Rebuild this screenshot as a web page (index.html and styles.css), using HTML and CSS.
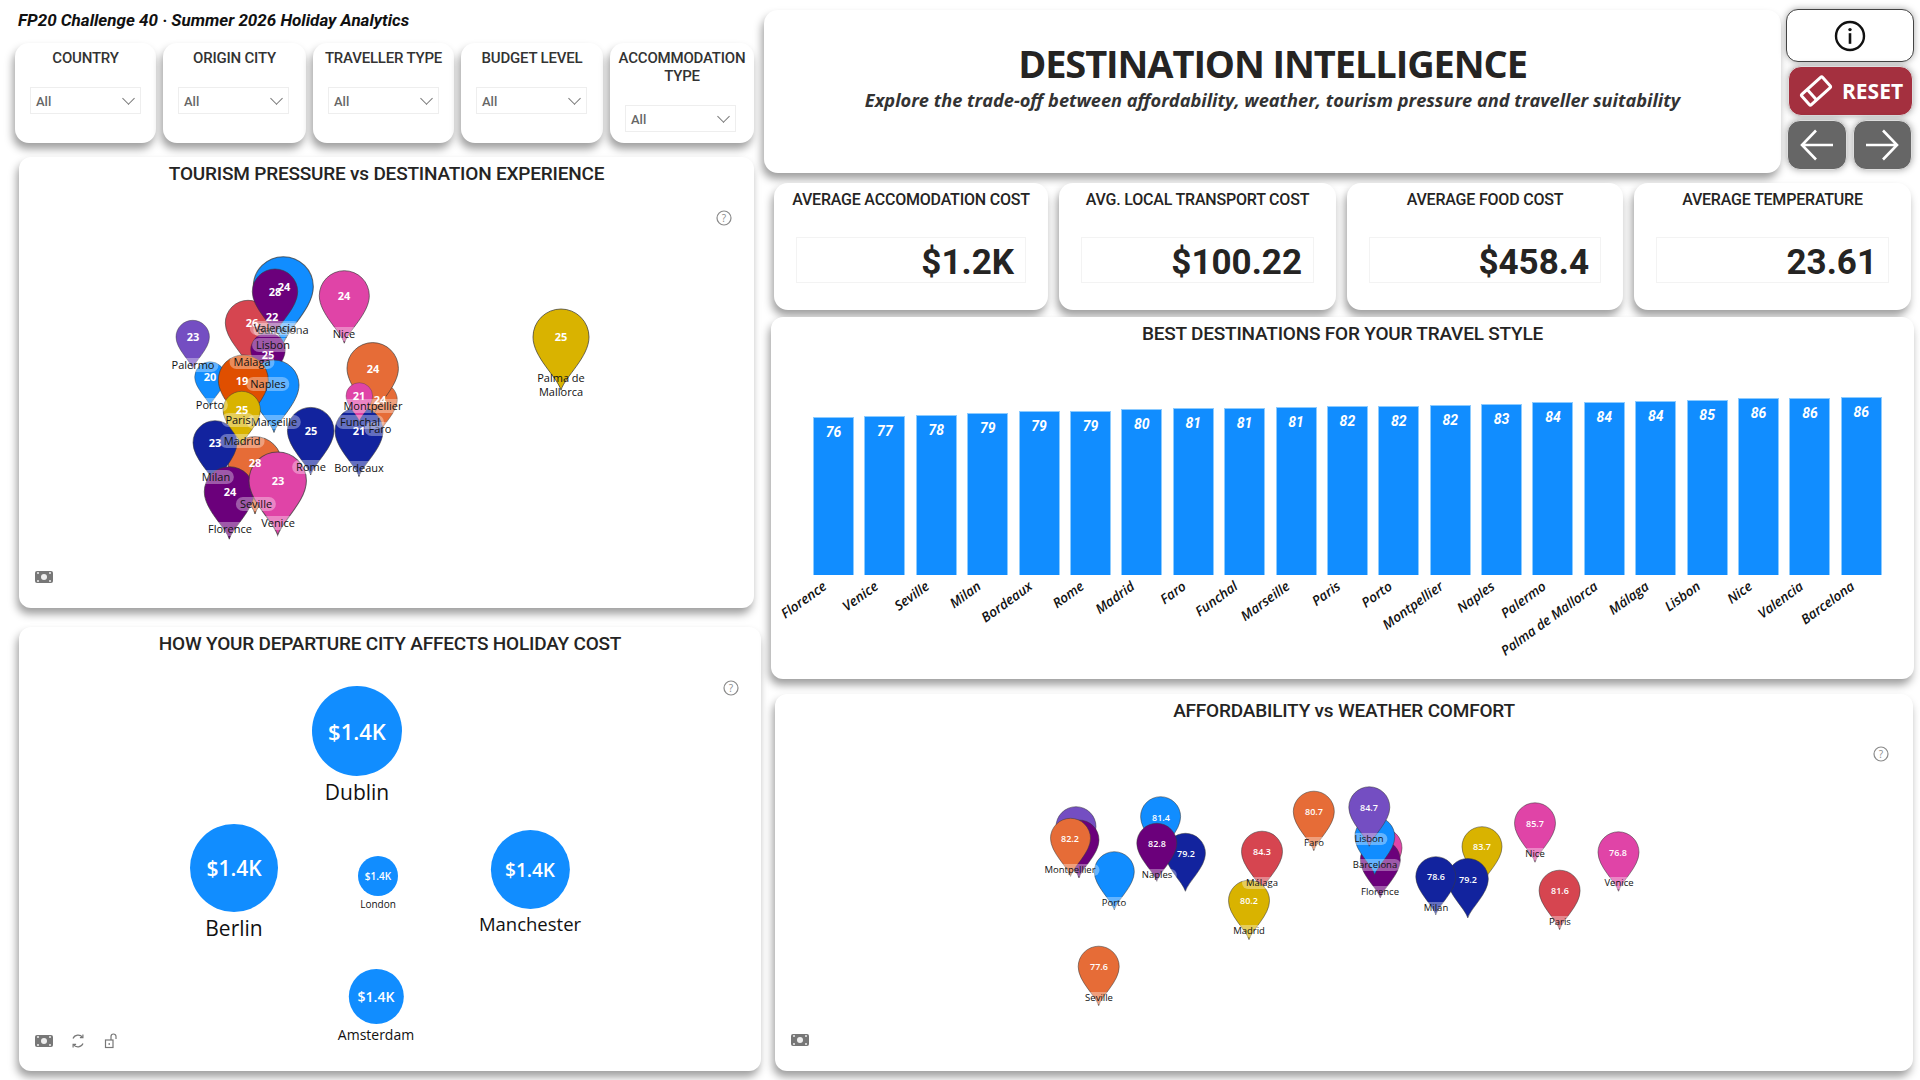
FILE: index.html
```html
<!DOCTYPE html>
<html lang="en">
<head>
    <meta charset="UTF-8">
    <title>Destination Intelligence</title>
    <link rel="stylesheet" href="styles.css">
</head>
<body>
    <svg class="defs" width="0" height="0">
        <defs>
            <path id="pin" d="M0 1.9C-.14 1.42-1 .72-1 0A1 1 0 0 1 1 0C1 .72.14 1.42 0 1.9Z"/>
            <g id="help">
                <circle cx="8" cy="8" r="7" fill="none" stroke="#8a8a8a" stroke-width="1.2"/>
                <text x="8" y="11.5" text-anchor="middle" class="help-mark">?</text>
            </g>
            <g id="focus">
                <rect x="0" y="0" width="18" height="12" rx="2" fill="#777"/>
                <circle cx="9" cy="6" r="3" fill="#eee"/>
                <path d="M2 2h2M14 2h2M2 10h2M14 10h2" stroke="#eee" stroke-width="1.4"/>
            </g>
        </defs>
    </svg>

    <div class="page">
        <!-- coluna esquerda -->
        <div class="left">
            <div class="report-title">FP20 Challenge 40 · Summer 2026 Holiday Analytics</div>

            <div class="filters">
                <div class="filter">
                    <div class="filter-name">COUNTRY</div>
                    <div class="dropdown">All<span class="chevron"></span></div>
                </div>
                <div class="filter">
                    <div class="filter-name">ORIGIN CITY</div>
                    <div class="dropdown">All<span class="chevron"></span></div>
                </div>
                <div class="filter">
                    <div class="filter-name">TRAVELLER TYPE</div>
                    <div class="dropdown">All<span class="chevron"></span></div>
                </div>
                <div class="filter">
                    <div class="filter-name">BUDGET LEVEL</div>
                    <div class="dropdown">All<span class="chevron"></span></div>
                </div>
                <div class="filter">
                    <div class="filter-name">ACCOMMODATION TYPE</div>
                    <div class="dropdown">All<span class="chevron"></span></div>
                </div>
            </div>

            <div class="panel panel-pressure">
                <h2 class="panel-title">TOURISM PRESSURE vs DESTINATION EXPERIENCE</h2>
                <div class="map">
                    <svg class="map-pins" viewBox="19 187 735 421">
                        <use href="#pin" class="c-blue" transform="translate(283.3 286.7) scale(30)"/>
                        <use href="#pin" class="c-red" transform="translate(248 323) scale(22.7)"/>
                        <use href="#pin" class="c-violet" transform="translate(275 291.7) scale(22.7)"/>
                        <use href="#pin" class="c-violet" transform="translate(268 350) scale(17.3)"/>
                        <use href="#pin" class="c-purple" transform="translate(192.7 337) scale(16.7)"/>
                        <use href="#pin" class="c-blue" transform="translate(274 385) scale(25)"/>
                        <use href="#pin" class="c-blue" transform="translate(210 377) scale(15.3)"/>
                        <use href="#pin" class="c-deep" transform="translate(243.3 380) scale(25)"/>
                        <use href="#pin" class="c-orange" transform="translate(255 463.3) scale(26.7)"/>
                        <use href="#pin" class="c-navy" transform="translate(215 442.7) scale(22)"/>
                        <use href="#pin" class="c-yellow" transform="translate(241.7 410) scale(18.7)"/>
                        <use href="#pin" class="c-violet" transform="translate(229.3 491.7) scale(25)"/>
                        <use href="#pin" class="c-pink" transform="translate(277.7 480.7) scale(28.7)"/>
                        <use href="#pin" class="c-navy" transform="translate(310.7 430.7) scale(23.3)"/>
                        <use href="#pin" class="c-orange" transform="translate(380 400) scale(17.3)"/>
                        <use href="#pin" class="c-orange" transform="translate(372.7 368.3) scale(25.7)"/>
                        <use href="#pin" class="c-navy" transform="translate(359 431) scale(24)"/>
                        <use href="#pin" class="c-pink" transform="translate(359.3 396) scale(13.3)"/>
                        <use href="#pin" class="c-pink" transform="translate(344.3 295.7) scale(25)"/>
                        <use href="#pin" class="c-yellow" transform="translate(561 337) scale(28)"/>

                        <text class="num" x="284" y="291">24</text>
                        <text class="num" x="252" y="327">26</text>
                        <text class="num" x="275" y="296">28</text>
                        <text class="num" x="272" y="321">22</text>
                        <text class="num" x="268" y="359">25</text>
                        <text class="num" x="193" y="341">23</text>
                        <text class="num" x="210" y="381">20</text>
                        <text class="num" x="242" y="385">19</text>
                        <text class="num" x="255" y="467">28</text>
                        <text class="num" x="215" y="447">23</text>
                        <text class="num" x="242" y="414">25</text>
                        <text class="num" x="230" y="496">24</text>
                        <text class="num" x="278" y="485">23</text>
                        <text class="num" x="311" y="435">25</text>
                        <text class="num" x="380" y="404">24</text>
                        <text class="num" x="373" y="373">24</text>
                        <text class="num" x="359" y="435">21</text>
                        <text class="num" x="359" y="400">21</text>
                        <text class="num" x="344" y="300">24</text>
                        <text class="num" x="561" y="341">25</text>
                    </svg>
                    <span class="pin-label" style="left:264px;top:143px">Barcelona</span>
                    <span class="pin-label" style="left:256px;top:141px">Valencia</span>
                    <span class="pin-label" style="left:325px;top:147px">Nice</span>
                    <span class="pin-label" style="left:254px;top:158px">Lisbon</span>
                    <span class="pin-label" style="left:174px;top:178px">Palermo</span>
                    <span class="pin-label" style="left:233px;top:175px">Málaga</span>
                    <span class="pin-label" style="left:249px;top:197px">Naples</span>
                    <span class="pin-label" style="left:191px;top:218px">Porto</span>
                    <span class="pin-label" style="left:354px;top:219px">Montpellier</span>
                    <span class="pin-label" style="left:255px;top:235px">Marseille</span>
                    <span class="pin-label" style="left:219px;top:233px">Paris</span>
                    <span class="pin-label" style="left:361px;top:242px">Faro</span>
                    <span class="pin-label" style="left:341px;top:235px">Funchal</span>
                    <span class="pin-label" style="left:223px;top:254px">Madrid</span>
                    <span class="pin-label" style="left:292px;top:280px">Rome</span>
                    <span class="pin-label" style="left:340px;top:281px">Bordeaux</span>
                    <span class="pin-label" style="left:197px;top:290px">Milan</span>
                    <span class="pin-label" style="left:237px;top:317px">Seville</span>
                    <span class="pin-label" style="left:259px;top:336px">Venice</span>
                    <span class="pin-label" style="left:211px;top:342px">Florence</span>
                    <span class="pin-label pin-label-wrap" style="left:542px;top:198px">Palma de<br>Mallorca</span>
                </div>
                <svg class="icon-help" width="16" height="16"><use href="#help"/></svg>
                <svg class="icon-focus" width="18" height="12"><use href="#focus"/></svg>
            </div>

            <div class="panel panel-departure">
                <h2 class="panel-title">HOW YOUR DEPARTURE CITY AFFECTS HOLIDAY COST</h2>
                <div class="bubbles">
                    <div class="bubble bubble-xl" style="left:338px;top:29px">
                        <div class="bubble-dot">$1.4K</div><div class="bubble-name">Dublin</div>
                    </div>
                    <div class="bubble bubble-lg" style="left:215px;top:167px">
                        <div class="bubble-dot">$1.4K</div><div class="bubble-name">Berlin</div>
                    </div>
                    <div class="bubble bubble-xs" style="left:359px;top:199px">
                        <div class="bubble-dot">$1.4K</div><div class="bubble-name">London</div>
                    </div>
                    <div class="bubble bubble-md" style="left:511px;top:173px">
                        <div class="bubble-dot">$1.4K</div><div class="bubble-name">Manchester</div>
                    </div>
                    <div class="bubble bubble-sm" style="left:357px;top:312px">
                        <div class="bubble-dot">$1.4K</div><div class="bubble-name">Amsterdam</div>
                    </div>
                </div>
                <svg class="icon-help" width="16" height="16"><use href="#help"/></svg>
                <div class="panel-tools">
                    <svg width="18" height="12"><use href="#focus"/></svg>
                    <svg width="16" height="16" viewBox="0 0 16 16" fill="none" stroke="#777" stroke-width="1.2">
                        <path d="M3 5.5A5.6 5.6 0 0 1 12.6 4.4M13 10.5A5.6 5.6 0 0 1 3.4 11.6"/>
                        <path d="M12.9 1.6v3h-3M3.1 14.4v-3h3"/>
                    </svg>
                    <svg width="16" height="16" viewBox="0 0 16 16" fill="none" stroke="#777" stroke-width="1.2">
                        <rect x="2.5" y="7" width="7.5" height="7.5"/>
                        <path d="M8 7V3.5a2.5 2.5 0 0 1 5 0V6M6.2 10v2"/>
                    </svg>
                </div>
            </div>
        </div>

        <!-- coluna direita -->
        <div class="right">
            <div class="top-row">
                <div class="header-card">
                    <h1>DESTINATION INTELLIGENCE</h1>
                    <p>Explore the trade-off between affordability, weather, tourism pressure and traveller suitability</p>
                </div>
                <div class="buttons">
                    <div class="btn-info">
                        <svg width="32" height="32" viewBox="0 0 32 32">
                            <circle cx="16" cy="16" r="14" fill="none" stroke="#111" stroke-width="2.4"/>
                            <circle cx="16" cy="9.6" r="1.7" fill="#111"/>
                            <rect x="14.7" y="13.2" width="2.6" height="10.6" fill="#111"/>
                        </svg>
                    </div>
                    <div class="btn-reset">
                        <svg width="36" height="36" viewBox="0 0 36 36" fill="none" stroke="#fff" stroke-width="3">
                            <g transform="rotate(-42 18 18)">
                                <rect x="4" y="11" width="28" height="14" rx="1.5"/>
                                <path d="M12.500 11v14"/>
                            </g>
                        </svg>
                        <span>RESET</span>
                    </div>
                    <div class="nav-row">
                        <div class="btn-nav">
                            <svg width="36" height="34" viewBox="0 0 36 34" fill="none" stroke="#fff" stroke-width="2.6">
                                <path d="M34 17H3M17 2.5L3 17l14 14.5"/>
                            </svg>
                        </div>
                        <div class="btn-nav">
                            <svg width="36" height="34" viewBox="0 0 36 34" fill="none" stroke="#fff" stroke-width="2.6">
                                <path d="M2 17h31M19 2.5L33 17 19 31.500"/>
                            </svg>
                        </div>
                    </div>
                </div>
            </div>

            <div class="kpis">
                <div class="kpi">
                    <div class="kpi-name">AVERAGE ACCOMODATION COST</div>
                    <div class="kpi-value">$1.2K</div>
                </div>
                <div class="kpi">
                    <div class="kpi-name">AVG. LOCAL TRANSPORT COST</div>
                    <div class="kpi-value">$100.22</div>
                </div>
                <div class="kpi">
                    <div class="kpi-name">AVERAGE FOOD COST</div>
                    <div class="kpi-value">$458.4</div>
                </div>
                <div class="kpi">
                    <div class="kpi-name">AVERAGE TEMPERATURE</div>
                    <div class="kpi-value">23.61</div>
                </div>
            </div>

            <div class="panel panel-best">
                <h2 class="panel-title">BEST DESTINATIONS FOR YOUR TRAVEL STYLE</h2>
                <div class="bars">
                    <div class="bar" style="height:158px"><span class="bar-value">76</span><span class="bar-name">Florence</span></div>
                    <div class="bar" style="height:159px"><span class="bar-value">77</span><span class="bar-name">Venice</span></div>
                    <div class="bar" style="height:160px"><span class="bar-value">78</span><span class="bar-name">Seville</span></div>
                    <div class="bar" style="height:162px"><span class="bar-value">79</span><span class="bar-name">Milan</span></div>
                    <div class="bar" style="height:164px"><span class="bar-value">79</span><span class="bar-name">Bordeaux</span></div>
                    <div class="bar" style="height:164px"><span class="bar-value">79</span><span class="bar-name">Rome</span></div>
                    <div class="bar" style="height:166px"><span class="bar-value">80</span><span class="bar-name">Madrid</span></div>
                    <div class="bar" style="height:167px"><span class="bar-value">81</span><span class="bar-name">Faro</span></div>
                    <div class="bar" style="height:167px"><span class="bar-value">81</span><span class="bar-name">Funchal</span></div>
                    <div class="bar" style="height:168px"><span class="bar-value">81</span><span class="bar-name">Marseille</span></div>
                    <div class="bar" style="height:169px"><span class="bar-value">82</span><span class="bar-name">Paris</span></div>
                    <div class="bar" style="height:169px"><span class="bar-value">82</span><span class="bar-name">Porto</span></div>
                    <div class="bar" style="height:170px"><span class="bar-value">82</span><span class="bar-name">Montpellier</span></div>
                    <div class="bar" style="height:171px"><span class="bar-value">83</span><span class="bar-name">Naples</span></div>
                    <div class="bar" style="height:173px"><span class="bar-value">84</span><span class="bar-name">Palermo</span></div>
                    <div class="bar" style="height:173px"><span class="bar-value">84</span><span class="bar-name">Palma de Mallorca</span></div>
                    <div class="bar" style="height:174px"><span class="bar-value">84</span><span class="bar-name">Málaga</span></div>
                    <div class="bar" style="height:175px"><span class="bar-value">85</span><span class="bar-name">Lisbon</span></div>
                    <div class="bar" style="height:177px"><span class="bar-value">86</span><span class="bar-name">Nice</span></div>
                    <div class="bar" style="height:177px"><span class="bar-value">86</span><span class="bar-name">Valencia</span></div>
                    <div class="bar" style="height:178px"><span class="bar-value">86</span><span class="bar-name">Barcelona</span></div>
                </div>
            </div>

            <div class="panel panel-comfort">
                <h2 class="panel-title">AFFORDABILITY vs WEATHER COMFORT</h2>
                <div class="map">
                    <svg class="map-pins map-small" viewBox="775 724 1138 347">
                        <use href="#pin" class="c-purple" transform="translate(1076 826.7) scale(20)"/>
                        <use href="#pin" class="c-violet" transform="translate(1079 840) scale(20)"/>
                        <use href="#pin" class="c-orange" transform="translate(1070.500 838.300) scale(20)"/>
                        <use href="#pin" class="c-blue" transform="translate(1114.300 871.700) scale(20)"/>
                        <use href="#pin" class="c-blue" transform="translate(1160.600 816.700) scale(20)"/>
                        <use href="#pin" class="c-navy" transform="translate(1185.400 853.300) scale(20)"/>
                        <use href="#pin" class="c-violet" transform="translate(1156.800 843.300) scale(20)"/>
                        <use href="#pin" class="c-red" transform="translate(1262 851.700) scale(20.500)"/>
                        <use href="#pin" class="c-yellow" transform="translate(1249 900.700) scale(20.500)"/>
                        <use href="#pin" class="c-orange" transform="translate(1313.800 811.700) scale(20.500)"/>
                        <use href="#pin" class="c-pink" transform="translate(1382 848) scale(20)"/>
                        <use href="#pin" class="c-violet" transform="translate(1380.300 860) scale(20)"/>
                        <use href="#pin" class="c-blue" transform="translate(1374.800 836.700) scale(20)"/>
                        <use href="#pin" class="c-purple" transform="translate(1369.300 807.300) scale(20.500)"/>
                        <use href="#pin" class="c-yellow" transform="translate(1482 846.700) scale(20)"/>
                        <use href="#pin" class="c-navy" transform="translate(1467.800 879) scale(20.500)"/>
                        <use href="#pin" class="c-navy" transform="translate(1435.800 876.700) scale(20)"/>
                        <use href="#pin" class="c-pink" transform="translate(1535 823.300) scale(20.500)"/>
                        <use href="#pin" class="c-red" transform="translate(1559.600 890.700) scale(20.500)"/>
                        <use href="#pin" class="c-pink" transform="translate(1618.500 852.300) scale(20.500)"/>
                        <use href="#pin" class="c-orange" transform="translate(1098.700 966.700) scale(20.500)"/>

                        <text class="num" x="1070" y="842">82.2</text>
                        <text class="num" x="1161" y="821">81.4</text>
                        <text class="num" x="1186" y="857">79.2</text>
                        <text class="num" x="1157" y="847">82.8</text>
                        <text class="num" x="1262" y="855">84.3</text>
                        <text class="num" x="1249" y="904">80.2</text>
                        <text class="num" x="1314" y="815">80.7</text>
                        <text class="num" x="1369" y="811">84.7</text>
                        <text class="num" x="1482" y="850">83.7</text>
                        <text class="num" x="1468" y="883">79.2</text>
                        <text class="num" x="1436" y="880">78.6</text>
                        <text class="num" x="1535" y="827">85.7</text>
                        <text class="num" x="1560" y="894">81.6</text>
                        <text class="num" x="1618" y="856">76.8</text>
                        <text class="num" x="1099" y="970">77.6</text>
                    </svg>
                    <span class="pin-label pin-label-sm" style="left:295px;top:146px">Montpellier</span>
                    <span class="pin-label pin-label-sm" style="left:339px;top:179px">Porto</span>
                    <span class="pin-label pin-label-sm" style="left:382px;top:151px">Naples</span>
                    <span class="pin-label pin-label-sm" style="left:487px;top:159px">Málaga</span>
                    <span class="pin-label pin-label-sm" style="left:474px;top:207px">Madrid</span>
                    <span class="pin-label pin-label-sm" style="left:539px;top:119px">Faro</span>
                    <span class="pin-label pin-label-sm" style="left:594px;top:115px">Lisbon</span>
                    <span class="pin-label pin-label-sm" style="left:600px;top:141px">Barcelona</span>
                    <span class="pin-label pin-label-sm" style="left:605px;top:168px">Florence</span>
                    <span class="pin-label pin-label-sm" style="left:661px;top:184px">Milan</span>
                    <span class="pin-label pin-label-sm" style="left:760px;top:130px">Nice</span>
                    <span class="pin-label pin-label-sm" style="left:785px;top:198px">Paris</span>
                    <span class="pin-label pin-label-sm" style="left:844px;top:159px">Venice</span>
                    <span class="pin-label pin-label-sm" style="left:324px;top:274px">Seville</span>
                </div>
                <svg class="icon-help" width="16" height="16"><use href="#help"/></svg>
                <svg class="icon-focus" width="18" height="12"><use href="#focus"/></svg>
            </div>
        </div>
    </div>
</body>
</html>
```
FILE: styles.css
```css
:root {
    --blue: #118dff;
    --navy: #12239e;
    --orange: #e66c37;
    --violet: #6b007b;
    --pink: #e044a7;
    --purple: #744ec2;
    --yellow: #d9b300;
    --red: #d64550;
    --text-color: #252423;
    --card-shadow: -2px 6px 8px rgba(0, 0, 0, 0.38);
}

* {
    margin: 0;
    padding: 0;
    box-sizing: border-box;
}

body {
    width: 1920px;
    height: 1080px;
    overflow: hidden;
    background-color: #fff;
    color: var(--text-color);
    font-family: 'Roboto', sans-serif;
}

.defs {
    position: absolute;
}

.page {
    display: flex;
    height: 100%;
}

/* Coluna esquerda */
.left {
    width: 764px;
    padding: 10px 0 0 15px;
}

.report-title {
    height: 33px;
    padding-left: 3px;
    font-size: 17px;
    font-weight: 700;
    font-style: italic;
    color: #111;
}

.filters {
    display: grid;
    grid-template-columns: 141px 143px 141px 142px 144px;
    gap: 7px;
    width: 739px;
    margin-bottom: 14px;
}

.filter {
    height: 100px;
    background-color: #fff;
    border-radius: 14px;
    box-shadow: var(--card-shadow);
}

.filter-name {
    padding-top: 6px;
    margin-bottom: 20px;
    font-size: 15px;
    font-weight: 500;
    line-height: 18px;
    letter-spacing: -0.2px;
    text-align: center;
    color: #333;
}

.dropdown {
    position: relative;
    width: 111px;
    height: 27px;
    margin-left: 15px;
    padding-left: 5px;
    border: 1px solid #eee;
    font-size: 13px;
    font-weight: 500;
    line-height: 28px;
    color: #666;
}

.chevron {
    position: absolute;
    top: 6px;
    right: 7px;
    width: 9px;
    height: 9px;
    border-right: 1px solid #777;
    border-bottom: 1px solid #777;
    transform: rotate(45deg);
}

.panel {
    position: relative;
    background-color: #fff;
    border-radius: 12px;
    box-shadow: var(--card-shadow);
}

.panel-title {
    height: 30px;
    font-size: 19px;
    font-weight: 500;
    line-height: 33px;
    letter-spacing: -0.2px;
    text-align: center;
    color: #252423;
}

.panel-pressure {
    width: 735px;
    height: 451px;
    margin-left: 4px;
    margin-bottom: 19px;
}

.panel-departure {
    width: 742px;
    height: 444px;
    margin-left: 4px;
}

.icon-help {
    position: absolute;
    top: 53px;
    right: 22px;
}

.panel-comfort .icon-help {
    top: 52px;
    right: 24px;
}

.help-mark {
    font-family: 'Open Sans', sans-serif;
    font-size: 10px;
    fill: #8a8a8a;
}

.icon-focus {
    position: absolute;
    left: 16px;
    bottom: 25px;
}

.panel-tools {
    position: absolute;
    left: 16px;
    bottom: 22px;
    display: flex;
    align-items: center;
    gap: 17px;
}

/* Mapas */
.map {
    position: relative;
}

.map-pins {
    display: block;
    width: 735px;
    height: 421px;
}

.map-pins use {
    stroke: #3a3a3a;
    stroke-opacity: 0.75;
    stroke-width: 0.035;
}

.c-blue { fill: var(--blue); }
.c-navy { fill: var(--navy); }
.c-orange { fill: var(--orange); }
.c-deep { fill: #e04f00; }
.c-violet { fill: var(--violet); }
.c-pink { fill: var(--pink); }
.c-purple { fill: var(--purple); }
.c-yellow { fill: var(--yellow); }
.c-red { fill: var(--red); }

.num {
    font-family: 'Open Sans', sans-serif;
    font-size: 11px;
    font-weight: 700;
    text-anchor: middle;
    fill: #fff;
}

.map-small {
    width: 1138px;
    height: 347px;
}

.map-small .num {
    font-size: 9px;
    font-weight: 600;
}

.pin-label {
    position: absolute;
    transform: translate(-50%, -50%);
    padding: 0 4px;
    border-radius: 8px;
    background-color: rgba(255, 255, 255, 0.35);
    font-family: 'Open Sans', sans-serif;
    font-size: 11px;
    line-height: 14px;
    white-space: nowrap;
    color: #111;
}

.pin-label-wrap {
    background: none;
    text-align: center;
}

.pin-label-sm {
    font-size: 9.5px;
    line-height: 12px;
}

/* Bolhas de custo */
.bubble {
    position: absolute;
    display: flex;
    flex-direction: column;
    align-items: center;
    gap: 4px;
    transform: translateX(-50%);
    font-family: 'Open Sans', sans-serif;
}

.bubbles {
    position: relative;
}

.bubble-dot {
    display: flex;
    align-items: center;
    justify-content: center;
    border-radius: 50%;
    background-color: var(--blue);
    font-weight: 600;
    color: #fff;
}

.bubble-name {
    line-height: 1.2;
    color: #111;
}

.bubble-xl .bubble-dot { width: 90px; height: 90px; font-size: 22px; }
.bubble-xl .bubble-name { font-size: 21px; }
.bubble-lg .bubble-dot { width: 88px; height: 88px; font-size: 21px; }
.bubble-lg .bubble-name { font-size: 21px; }
.bubble-md .bubble-dot { width: 79px; height: 79px; font-size: 19px; }
.bubble-md .bubble-name { font-size: 18.500px; }
.bubble-sm { gap: 3px; }
.bubble-sm .bubble-dot { width: 55px; height: 55px; font-size: 14px; }
.bubble-sm .bubble-name { font-size: 14px; }
.bubble-xs { gap: 2px; }
.bubble-xs .bubble-dot { width: 40px; height: 40px; font-size: 10px; }
.bubble-xs .bubble-name { font-size: 10px; }

/* Coluna direita */
.right {
    width: 1156px;
    padding-top: 9px;
}

.top-row {
    display: flex;
    gap: 5px;
    height: 174px;
}

.header-card {
    width: 1017px;
    height: 163px;
    margin-top: 1px;
    padding-top: 29px;
    background-color: #fff;
    border-radius: 14px;
    box-shadow: var(--card-shadow);
    text-align: center;
}

.header-card h1 {
    font-family: 'Open Sans', sans-serif;
    font-size: 38px;
    font-weight: 700;
    line-height: 48px;
    letter-spacing: -1.100px;
    color: #252423;
}

.header-card p {
    font-family: 'Open Sans', sans-serif;
    font-size: 18.200px;
    font-weight: 700;
    font-style: italic;
    line-height: 26px;
    color: #333;
}

.buttons {
    display: flex;
    flex-direction: column;
    gap: 4px;
    width: 128px;
}

.btn-info {
    display: flex;
    align-items: center;
    justify-content: center;
    height: 53px;
    background-color: #fff;
    border: 1px solid #444;
    border-radius: 12px;
    box-shadow: 0 0 7px rgba(0, 0, 0, 0.35);
}

.btn-reset {
    display: flex;
    align-items: center;
    justify-content: center;
    gap: 8px;
    height: 50px;
    margin: 0 1px 0 2px;
    background-color: #a4303f;
    border: 1px solid #ddd;
    border-radius: 13px;
    box-shadow: 0 0 7px rgba(0, 0, 0, 0.35);
    font-family: 'Open Sans', sans-serif;
    font-size: 21px;
    font-weight: 700;
    color: #fff;
}

.nav-row {
    display: flex;
    gap: 6px;
    margin: 0 2px 0 1px;
}

.btn-nav {
    display: flex;
    align-items: center;
    justify-content: center;
    flex: 1;
    height: 50px;
    background-color: #666;
    border: 1px solid #ddd;
    border-radius: 13px;
    box-shadow: 0 0 7px rgba(0, 0, 0, 0.35);
}

.kpis {
    display: grid;
    grid-template-columns: 274px 277px 276px 277px;
    gap: 11px;
    margin-left: 10px;
    margin-bottom: 7px;
}

.kpi {
    height: 127px;
    padding: 8px 22px 0;
    background-color: #fff;
    border-radius: 14px;
    box-shadow: var(--card-shadow);
}

.kpi-name {
    margin: 0 -20px;
    font-size: 16px;
    font-weight: 500;
    line-height: 18px;
    letter-spacing: -0.2px;
    text-align: center;
    color: #252423;
}

.kpi-value {
    height: 46px;
    margin-top: 28px;
    padding-right: 11px;
    border: 1px solid #f3f3f3;
    font-size: 35px;
    font-weight: 700;
    line-height: 50px;
    text-align: right;
    color: #252423;
}

.panel-best {
    width: 1143px;
    height: 362px;
    margin-left: 7px;
    margin-bottom: 15px;
}

.bars {
    display: flex;
    align-items: flex-end;
    gap: 10.400px;
    height: 228px;
    margin-left: 42px;
}

.bar {
    position: relative;
    width: 41px;
    background-color: var(--blue);
    border: 1px solid #8ccbff;
    border-bottom: 0;
    text-align: center;
}

.bar-value {
    display: block;
    padding-top: 6px;
    font-size: 14px;
    font-weight: 700;
    font-style: italic;
    color: #fff;
}

.bar-name {
    position: absolute;
    top: calc(100% + 2px);
    right: calc(50% + 14px);
    font-family: 'Open Sans', sans-serif;
    font-size: 13.500px;
    font-weight: 600;
    font-style: italic;
    white-space: nowrap;
    color: #111;
    transform-origin: top right;
    transform: rotate(-36deg);
}

.panel-comfort {
    width: 1138px;
    height: 377px;
    margin-left: 11px;
}
```
